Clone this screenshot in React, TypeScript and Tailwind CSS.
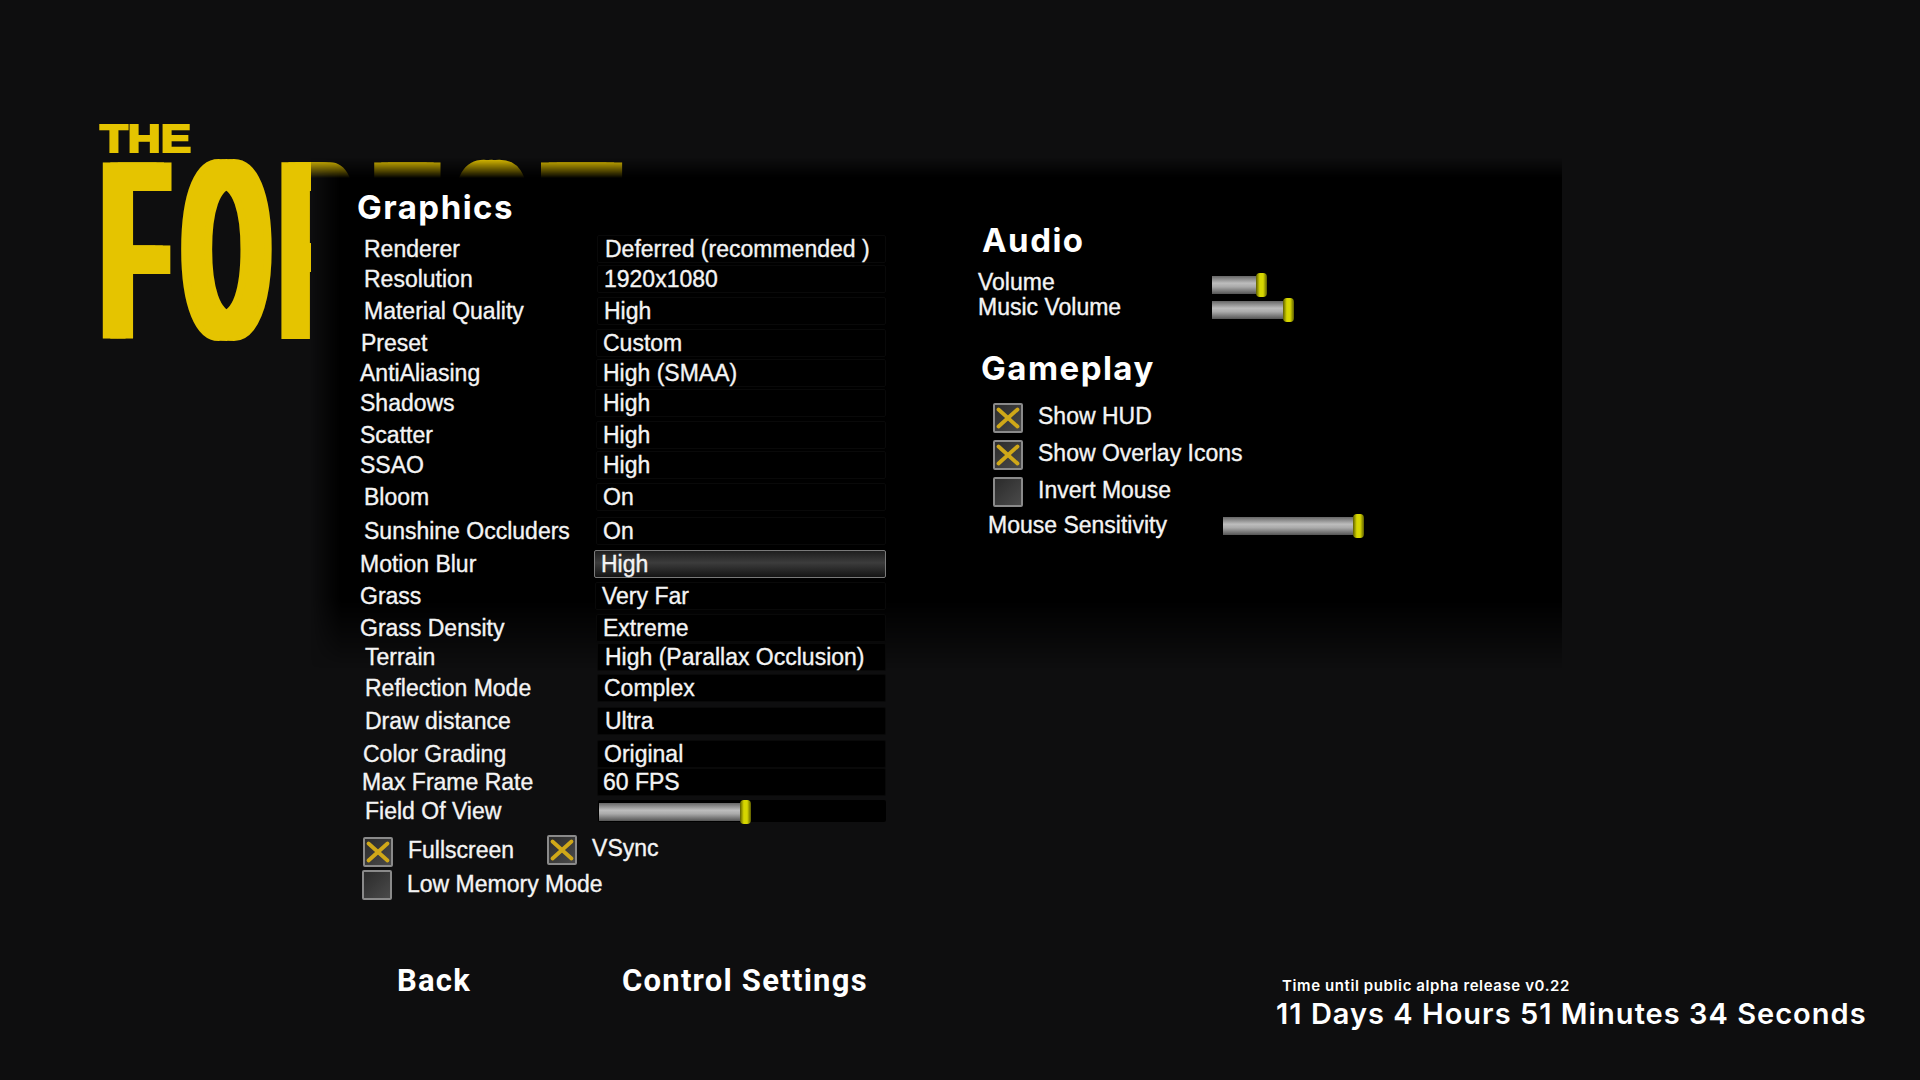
import clsx from 'clsx';

const rows = [
  { label: 'Renderer', value: 'Deferred (recommended )', gap: 'mt-[10px]', lp: 'pl-[7px]', box: 'ml-[2px]', vp: 'pl-[7px]' },
  { label: 'Resolution', value: '1920x1080', gap: 'mt-[2px]', lp: 'pl-[7px]', box: 'ml-[2px]', vp: 'pl-[6px]' },
  { label: 'Material Quality', value: 'High', gap: 'mt-[4px]', lp: 'pl-[7px]', box: 'ml-[2px]', vp: 'pl-[6px]' },
  { label: 'Preset', value: 'Custom', gap: 'mt-[4px]', lp: 'pl-[4px]', box: 'ml-[1px]', vp: 'pl-[6px]' },
  { label: 'AntiAliasing', value: 'High (SMAA)', gap: 'mt-[2px]', lp: 'pl-[3px]', box: 'ml-[1px]', vp: 'pl-[6px]' },
  { label: 'Shadows', value: 'High', gap: 'mt-[2px]', lp: 'pl-[3px]', box: 'ml-[0px]', vp: 'pl-[7px]' },
  { label: 'Scatter', value: 'High', gap: 'mt-[4px]', lp: 'pl-[3px]', box: 'ml-[1px]', vp: 'pl-[6px]' },
  { label: 'SSAO', value: 'High', gap: 'mt-[2px]', lp: 'pl-[3px]', box: 'ml-[1px]', vp: 'pl-[6px]' },
  { label: 'Bloom', value: 'On', gap: 'mt-[4px]', lp: 'pl-[7px]', box: 'ml-[1px]', vp: 'pl-[6px]' },
  { label: 'Sunshine Occluders', value: 'On', gap: 'mt-[6px]', lp: 'pl-[7px]', box: 'ml-[1px]', vp: 'pl-[6px]' },
  { label: 'Motion Blur', value: 'High', gap: 'mt-[5px]', lp: 'pl-[3px]', box: 'ml-[-1px]', vp: 'pl-[6px]', active: true },
  { label: 'Grass', value: 'Very Far', gap: 'mt-[4px]', lp: 'pl-[3px]', box: 'ml-[0px]', vp: 'pl-[6px]' },
  { label: 'Grass Density', value: 'Extreme', gap: 'mt-[4px]', lp: 'pl-[3px]', box: 'ml-[1px]', vp: 'pl-[6px]' },
  { label: 'Terrain', value: 'High (Parallax Occlusion)', gap: 'mt-[1px]', lp: 'pl-[8px]', box: 'ml-[2px]', vp: 'pl-[7px]' },
  { label: 'Reflection Mode', value: 'Complex', gap: 'mt-[3px]', lp: 'pl-[8px]', box: 'ml-[2px]', vp: 'pl-[6px]' },
  { label: 'Draw distance', value: 'Ultra', gap: 'mt-[5px]', lp: 'pl-[8px]', box: 'ml-[2px]', vp: 'pl-[7px]' },
  { label: 'Color Grading', value: 'Original', gap: 'mt-[5px]', lp: 'pl-[6px]', box: 'ml-[2px]', vp: 'pl-[6px]' },
  { label: 'Max Frame Rate', value: '60 FPS', gap: 'mt-[0px]', lp: 'pl-[5px]', box: 'ml-[2px]', vp: 'pl-[5px]' },
];

const textStyle = 'text-[23px] leading-none text-[#f4f4f4] [-webkit-text-stroke:0.35px_#f4f4f4]';
const headingStyle = "font-['Inter'] text-[33px] font-bold leading-none tracking-[0.045em] text-white";

function Slider({ fill, className }: { fill: string; className?: string }) {
  return (
    <div className={clsx('flex h-[24px] items-center', className)}>
      <div className={clsx('h-[18px] bg-[linear-gradient(to_bottom,#666,#bdbdbd_40%,#aaa_60%,#555)]', fill)} />
      <div className="-ml-[3px] h-[24px] w-[11px] rounded-[4px] bg-[linear-gradient(to_right,#5c5c00,#d6d600_35%,#d6d600_65%,#5c5c00)]" />
    </div>
  );
}

function CheckBox({ checked, className }: { checked?: boolean; className?: string }) {
  return (
    <div
      className={clsx(
        'flex h-[30px] w-[30px] shrink-0 items-center justify-center rounded-[2px] border-2 border-[#8a8a8a] bg-[linear-gradient(135deg,#2b2b2b,#4a4a4a)]',
        className,
      )}
    >
      {checked ? (
        <svg width="26" height="26" viewBox="0 0 26 26" fill="none" stroke="#d0a818" strokeWidth="3.8" strokeLinecap="round">
          <line x1="3.5" y1="4.5" x2="22.5" y2="21.5" />
          <line x1="22.5" y1="4.5" x2="3.5" y2="21.5" />
        </svg>
      ) : null}
    </div>
  );
}

export default function App() {
  return (
    <div className="relative h-[1080px] w-[1920px] overflow-hidden bg-[#0e0e0f] font-['Liberation_Sans',Arial,sans-serif] text-white">
      {/* logo sits under the panel, only the tops of the last letters show */}
      <div className="absolute left-[100px] top-[122px] font-bold text-[#e5c400]">
        <div className="h-[38px] origin-left scale-x-[1.2] text-[38px] leading-[34px] [-webkit-text-stroke:2px_#e5c400]">THE</div>
        <div className="flex h-[181px] text-[256px] leading-[181px] [text-shadow:18px_0_0_#e5c400,-18px_0_0_#e5c400]">
          <span className="flex w-[71px] scale-x-[0.413] justify-center">F</span>
          <span className="ml-[10px] flex w-[91px] scale-x-[0.423] justify-center">O</span>
          <span className="ml-[7px] flex w-[78px] scale-x-[0.392] justify-center">R</span>
          <span className="ml-[14px] flex w-[72px] scale-x-[0.379] justify-center">E</span>
          <span className="ml-[9px] flex w-[79px] scale-x-[0.427] justify-center">S</span>
          <span className="ml-[11px] flex w-[79px] scale-x-[0.434] justify-center">T</span>
        </div>
      </div>

      {/* panel backdrop */}
      <div className="absolute left-[311px] top-[158px] h-[510px] w-[1251px] bg-[#0e0e0f] [mask-image:linear-gradient(to_bottom,transparent,black_20px)]">
        <div className="h-full w-full bg-black [mask-composite:intersect] [mask-image:linear-gradient(to_right,transparent,black_30px),linear-gradient(to_bottom,black,black_440px,transparent)]" />
      </div>

      <div className="relative z-10">
        <div className="flex pl-[357px] pt-[191px]">
          <section className="w-[529px]">
            <h2 className={clsx(headingStyle, 'h-[34px]')}>Graphics</h2>
            {rows.map((r) => (
              <div key={r.label} className={clsx('flex h-[28px] items-center', r.gap, textStyle)}>
                <span className={clsx('w-[238px] shrink-0', r.lp)}>{r.label}</span>
                <span
                  className={clsx(
                    'flex h-[28px] flex-1 items-center rounded-[2px] border',
                    r.box,
                    r.vp,
                    r.active
                      ? 'border-[#7a7a7a] bg-[linear-gradient(to_bottom,#1e1e1e,#3c3c3c_45%,#141414)]'
                      : 'border-[#090909] bg-black',
                  )}
                >
                  {r.value}
                </span>
              </div>
            ))}
            <div className={clsx('mt-[3px] flex h-[24px] items-center', textStyle)}>
              <span className="w-[241px] shrink-0 pl-[8px]">Field Of View</span>
              <div className="h-[22px] flex-1 rounded-[2px] bg-black pl-[1px]">
                <Slider fill="w-[144px]" />
              </div>
            </div>
            <div className={clsx('mt-[11px] flex h-[32px] items-center', textStyle)}>
              <CheckBox checked className="ml-[6px] mt-[3px]" />
              <span className="ml-[15px]">Fullscreen</span>
              <CheckBox checked className="ml-[33px] -mt-[1px]" />
              <span className="ml-[15px] -mt-[3px]">VSync</span>
            </div>
            <div className={clsx('mt-[3px] flex h-[32px] items-center', textStyle)}>
              <CheckBox className="ml-[5px]" />
              <span className="ml-[15px] -mt-[2px]">Low Memory Mode</span>
            </div>
          </section>

          <section className="ml-[92px] pt-[33px]">
            <h2 className={clsx(headingStyle, 'ml-[4px] h-[34px]')}>Audio</h2>
            <div className={clsx('mt-[12px] flex h-[24px] items-center', textStyle)}>
              <span className="w-[234px]">Volume</span>
              <Slider fill="w-[47px]" className="mt-[6px]" />
            </div>
            <div className={clsx('mt-[1px] flex h-[24px] items-center', textStyle)}>
              <span className="w-[234px]">Music Volume</span>
              <Slider fill="w-[74px]" className="mt-[6px]" />
            </div>
            <h2 className={clsx(headingStyle, 'ml-[3px] mt-[33px] h-[34px]')}>Gameplay</h2>
            <div className={clsx('ml-[15px] mt-[17px] flex h-[30px] items-center', textStyle)}>
              <CheckBox checked />
              <span className="ml-[15px] -mt-[3px]">Show HUD</span>
            </div>
            <div className={clsx('ml-[15px] mt-[7px] flex h-[30px] items-center', textStyle)}>
              <CheckBox checked />
              <span className="ml-[15px] -mt-[3px]">Show Overlay Icons</span>
            </div>
            <div className={clsx('ml-[15px] mt-[7px] flex h-[30px] items-center', textStyle)}>
              <CheckBox />
              <span className="ml-[15px] -mt-[3px]">Invert Mouse</span>
            </div>
            <div className={clsx('ml-[10px] mt-[3px] flex h-[30px] items-center', textStyle)}>
              <span className="w-[235px]">Mouse Sensitivity</span>
              <Slider fill="w-[133px]" className="mt-[2px]" />
            </div>
          </section>
        </div>

        <div className="mt-[60px] flex items-start pl-[397px]">
          <button type="button" className="w-[225px] text-left font-['Roboto'] text-[31px] font-bold leading-[40px] tracking-[0.04em]">
            Back
          </button>
          <button type="button" className="w-[654px] text-left font-['Roboto'] text-[31px] font-bold leading-[40px] tracking-[0.04em]">
            Control Settings
          </button>
          <div className="mt-[15px] font-['Inter'] font-semibold text-white">
            <div className="ml-[6px] text-[15px] leading-[20px] tracking-[0.04em]">Time until public alpha release v0.22</div>
            <div className="text-[29px] leading-[36px] tracking-[0.035em]">11 Days 4 Hours 51 Minutes 34 Seconds</div>
          </div>
        </div>
      </div>
    </div>
  );
}
